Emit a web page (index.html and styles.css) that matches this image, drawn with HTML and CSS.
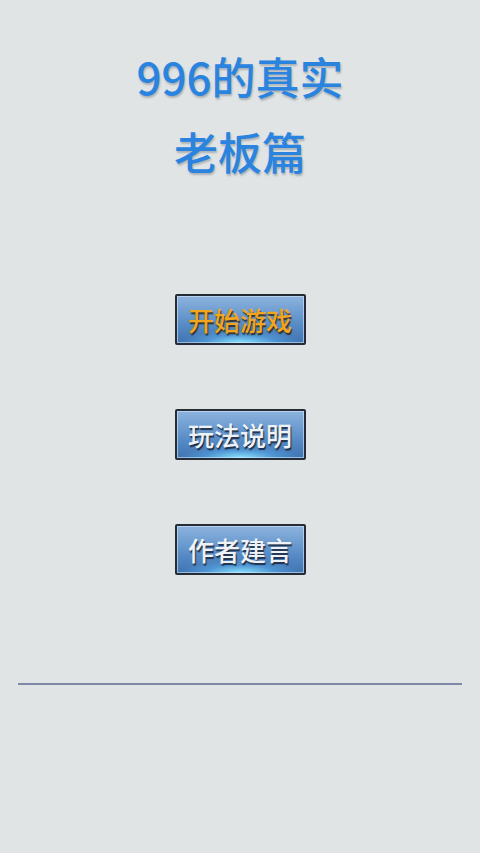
FILE: index.html
```html
<!DOCTYPE html>
<html lang="zh">
<head>
<meta charset="utf-8">
<title>996的真实 老板篇</title>
<link rel="stylesheet" href="styles.css">
</head>
<body>
<div class="page">
  <h1 class="title">
    <span class="title-line">996的真实</span>
    <span class="title-line">老板篇</span>
  </h1>
  <nav class="menu">
    <button class="btn btn-start">开始游戏</button>
    <button class="btn">玩法说明</button>
    <button class="btn">作者建言</button>
  </nav>
  <hr class="divider">
</div>
</body>
</html>
```

FILE: styles.css
```css
html, body {
  margin: 0;
  padding: 0;
  background: #e0e4e5;
}
.page {
  width: 480px;
  height: 853px;
  display: flex;
  flex-direction: column;
  align-items: center;
  font-family: "Noto Sans CJK SC", "Noto Sans", sans-serif;
}
.title {
  margin: 47px 0 0 0;
  display: flex;
  flex-direction: column;
  align-items: center;
  gap: 17px;
  font-weight: 500;
  font-size: 44px;
  line-height: 58px;
  color: #2a84df;
  text-shadow: 1px 2px 2px rgba(90, 100, 110, 0.4);
}
.title-line {
  display: block;
}
.menu {
  margin-top: 114px;
  display: flex;
  flex-direction: column;
  align-items: center;
  gap: 64px;
}
.btn {
  width: 131px;
  height: 51px;
  box-sizing: border-box;
  padding: 0;
  border: 2px solid #262c36;
  border-radius: 2px;
  font-family: "Noto Sans CJK SC", sans-serif;
  font-weight: 500;
  font-size: 26px;
  line-height: 1;
  color: #eef2f6;
  text-shadow: 1px 2px 1px rgba(20, 30, 50, 0.85);
  background:
    radial-gradient(ellipse 60px 13px at 50% 100%, rgba(140, 230, 255, 1), rgba(90, 180, 245, 0.45) 60%, rgba(60, 140, 220, 0) 100%),
    linear-gradient(to bottom, #8db3de 0%, #72a0d2 30%, #5589c4 65%, #3f74b2 100%);
  box-shadow: inset 0 0 0 1px rgba(210, 230, 250, 0.6);
}
.btn-start {
  color: #f3a51c;
  text-shadow: 1px 2px 1px rgba(40, 30, 10, 0.8);
}
.divider {
  margin: 108px 0 0 0;
  width: 444px;
  height: 0;
  border: 0;
  border-top: 2px solid #7d89a6;
}
```
